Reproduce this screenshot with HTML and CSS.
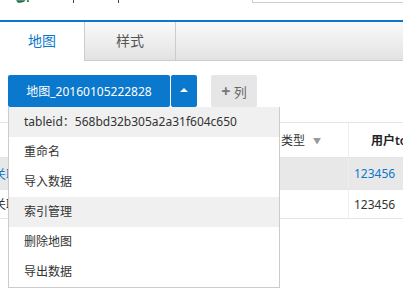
FILE: index.html
```html
<html>
    <head>
        <meta charset="utf-8">
        <title>地图</title>
        <link rel="stylesheet" href="styles.css">
    </head>
    <body>
        <div class="topbar">
            <svg class="logo" width="16" height="4" viewBox="0 0 16 4">
                <path d="M0 0 L11 0 C9 2 6 3.5 2 2.5 Z" fill="#1f6e46"/>
                <circle cx="13.5" cy="1" r="1.2" fill="#1f6e46"/>
            </svg>
            <span class="mark mark-a"></span>
            <span class="mark mark-b"></span>
            <div class="search"></div>
        </div>
        <div class="tabs">
            <div class="tab active">地图</div>
            <div class="tab">样式</div>
            <div class="tab-fill"></div>
        </div>
        <div class="toolbar">
            <button class="btn btn-primary btn-main">地图_20160105222828</button>
            <button class="btn btn-primary btn-caret"><span class="caret"></span></button>
            <button class="btn btn-add"><b class="plus">+</b> 列</button>
            <ul class="dropdown">
                <li class="active">tableid：568bd32b305a2a31f604c650</li>
                <li>重命名</li>
                <li>导入数据</li>
                <li class="active">索引管理</li>
                <li>删除地图</li>
                <li>导出数据</li>
            </ul>
        </div>
        <div class="grid">
            <div class="row head">
                <div class="cell col-name"></div>
                <div class="cell col-type">类型 <span class="sort">▼</span></div>
                <div class="cell col-token">用户token</div>
            </div>
            <div class="row odd">
                <div class="cell col-name link">关联表</div>
                <div class="cell col-type"></div>
                <div class="cell col-token link">123456</div>
            </div>
            <div class="row">
                <div class="cell col-name">关联表</div>
                <div class="cell col-type"></div>
                <div class="cell col-token">123456</div>
            </div>
        </div>
    </body>
</html>
```

FILE: styles.css
```css
body {
    margin: 0;
    overflow: hidden;
    font-family: "Noto Sans", "Noto Sans CJK SC", sans-serif;
    font-size: 12px;
    color: #333;
    background-color: #fff;
}
.topbar {
    display: flex;
    height: 20px;
    border-bottom: 2px solid #0a78cc;
}
.logo {
    margin-left: 16px;
}
.mark {
    width: 1px;
    height: 3px;
    background-color: #444;
}
.mark-a {
    margin-left: 43px;
}
.mark-b {
    margin-left: 44px;
}
.search {
    margin-left: 133px;
    width: 170px;
    height: 2px;
    border-left: 1px solid #ccc;
    border-bottom: 1px solid #ccc;
}
.tabs {
    display: flex;
    height: 39px;
}
.tab {
    flex-shrink: 0;
    width: 90px;
    height: 38px;
    line-height: 38px;
    text-align: center;
    font-size: 14px;
    color: #555;
    background: linear-gradient(#fafafa, #e2e2e2);
    border-left: 1px solid #ccc;
    border-right: 1px solid #ccc;
    border-bottom: 1px solid #ccc;
}
.tab.active {
    width: 84px;
    color: #0a78cc;
    background: #fff;
    border: none;
}
.tab-fill {
    flex: 1;
    height: 38px;
    background: linear-gradient(#fafafa, #e2e2e2);
    border-bottom: 1px solid #ccc;
}
.toolbar {
    position: relative;
    display: flex;
    margin-top: 14px;
    padding-left: 8px;
}
.btn {
    height: 32px;
    border: none;
    border-radius: 2px;
    font-family: inherit;
    font-size: 12px;
    padding: 0;
}
.btn-primary {
    background-color: #0a78cc;
    color: #fff;
}
.btn-main {
    width: 162px;
}
.btn-caret {
    width: 26px;
    margin-left: 1px;
}
.caret {
    display: inline-block;
    vertical-align: middle;
    border-left: 4px solid transparent;
    border-right: 4px solid transparent;
    border-bottom: 4px solid #fff;
    margin-bottom: 3px;
}
.btn-add {
    width: 46px;
    margin-left: 14px;
    background-color: #e6e6e6;
    color: #666;
    font-size: 13px;
}
.plus {
    font-size: 16px;
    color: #777;
}
.dropdown {
    position: absolute;
    top: 32px;
    left: 8px;
    z-index: 5;
    width: 270px;
    margin: 0;
    padding: 0;
    list-style: none;
    background-color: #fff;
    border: 1px solid #ccc;
    border-top: none;
}
.dropdown li {
    height: 30px;
    line-height: 30px;
    padding-left: 15px;
    color: #333;
}
.dropdown li.active {
    background-color: #f0f0f0;
}
.grid {
    margin-top: 15px;
    margin-left: -40px;
    border-top: 1px solid #e5e5e5;
}
.row {
    display: flex;
    height: 31px;
    border-bottom: 1px solid #e5e5e5;
}
.row.head {
    height: 34px;
    background-color: #fff;
}
.row.odd {
    background-color: #e8e8e8;
}
.row:last-child {
    height: 28px;
}
.cell {
    flex-shrink: 0;
    display: flex;
    align-items: center;
    white-space: nowrap;
    box-sizing: border-box;
}
.col-name {
    width: 310px;
    padding-left: 34px;
}
.col-type {
    width: 78px;
    padding-left: 10px;
    border-left: 1px solid #eee;
}
.col-token {
    width: 110px;
    padding-left: 5px;
    border-left: 1px solid #eee;
}
.head .col-token {
    padding-left: 22px;
    font-weight: 600;
    color: #222;
}
.sort {
    margin-left: 8px;
    font-size: 8px;
    color: #999;
}
.link {
    color: #0a78cc;
}
```
